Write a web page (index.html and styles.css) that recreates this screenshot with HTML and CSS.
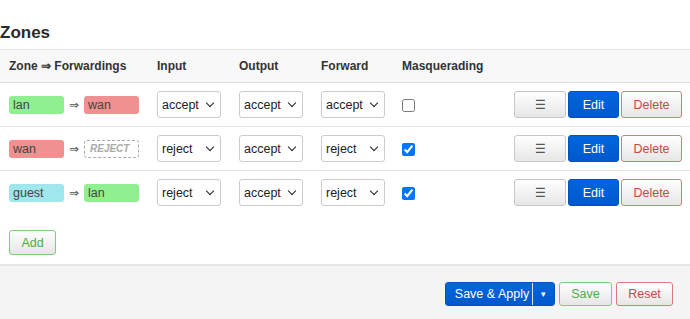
FILE: index.html
```html
<!DOCTYPE html>
<html lang="en">

<head>
    <meta charset="UTF-8">
    <title>Zones</title>
    <link rel="stylesheet" href="styles.css">
</head>

<body>
    <div class="section">
        <h3>Zones</h3>
        <table class="zones">
            <colgroup>
                <col class="c-zone">
                <col class="c-pol">
                <col class="c-pol">
                <col class="c-pol2">
                <col class="c-masq">
                <col>
            </colgroup>
            <thead>
                <tr>
                    <th>Zone ⇒ Forwardings</th>
                    <th>Input</th>
                    <th>Output</th>
                    <th>Forward</th>
                    <th>Masquerading</th>
                    <th></th>
                </tr>
            </thead>
            <tbody>
                <tr>
                    <td>
                        <div class="fwd">
                            <span class="badge lan">lan</span>
                            <span class="arrow">⇒</span>
                            <span class="badge wan">wan</span>
                        </div>
                    </td>
                    <td><span class="sel"><select><option selected>accept</option><option>reject</option></select></span></td>
                    <td><span class="sel"><select><option selected>accept</option><option>reject</option></select></span></td>
                    <td><span class="sel"><select><option selected>accept</option><option>reject</option></select></span></td>
                    <td><input type="checkbox"></td>
                    <td class="actions">
                        <button class="btn">☰</button><button class="btn edit">Edit</button><button class="btn delete">Delete</button>
                    </td>
                </tr>
                <tr>
                    <td>
                        <div class="fwd">
                            <span class="badge wan">wan</span>
                            <span class="arrow">⇒</span>
                            <span class="badge empty">REJECT</span>
                        </div>
                    </td>
                    <td><span class="sel"><select><option>accept</option><option selected>reject</option></select></span></td>
                    <td><span class="sel"><select><option selected>accept</option><option>reject</option></select></span></td>
                    <td><span class="sel"><select><option>accept</option><option selected>reject</option></select></span></td>
                    <td><input type="checkbox" checked></td>
                    <td class="actions">
                        <button class="btn">☰</button><button class="btn edit">Edit</button><button class="btn delete">Delete</button>
                    </td>
                </tr>
                <tr>
                    <td>
                        <div class="fwd">
                            <span class="badge guest">guest</span>
                            <span class="arrow">⇒</span>
                            <span class="badge lan">lan</span>
                        </div>
                    </td>
                    <td><span class="sel"><select><option>accept</option><option selected>reject</option></select></span></td>
                    <td><span class="sel"><select><option selected>accept</option><option>reject</option></select></span></td>
                    <td><span class="sel"><select><option>accept</option><option selected>reject</option></select></span></td>
                    <td><input type="checkbox" checked></td>
                    <td class="actions">
                        <button class="btn">☰</button><button class="btn edit">Edit</button><button class="btn delete">Delete</button>
                    </td>
                </tr>
            </tbody>
        </table>
        <div class="add-row">
            <button class="btn add">Add</button>
        </div>
    </div>

    <div class="page-actions">
        <div class="split">
            <button class="split-main">Save &amp; Apply</button><button class="split-toggle">▾</button>
        </div>
        <button class="btn save">Save</button>
        <button class="btn reset">Reset</button>
    </div>
</body>

</html>
```

FILE: styles.css
```css
* {
    margin: 0;
    padding: 0;
    box-sizing: border-box;
}

body {
    font-family: "Liberation Sans", Arial, sans-serif;
    font-size: 12px;
    color: #404040;
    background: #fff;
}

h3 {
    font-size: 17px;
    font-weight: bold;
    color: #2b2b2b;
    line-height: 20px;
    padding-top: 23px;
    padding-bottom: 6px;
}

.zones {
    width: 100%;
    border-collapse: collapse;
    table-layout: fixed;
}

.c-zone { width: 148px; }
.c-pol { width: 82px; }
.c-pol2 { width: 81px; }
.c-masq { width: 110px; }

.zones th {
    text-align: left;
    font-weight: bold;
    font-size: 12px;
    line-height: 16px;
    padding: 8px 9px;
    background: #f8f8f8;
    border-top: 1px solid #e4e4e4;
    border-bottom: 1px solid #dcdcdc;
    white-space: nowrap;
    color: #333;
}

.zones td {
    padding: 8px 9px;
    vertical-align: middle;
    border-bottom: 1px solid #e2e2e2;
}

.zones tbody tr:last-child td {
    border-bottom: none;
}

.fwd {
    display: flex;
    align-items: center;
}

.badge {
    display: inline-block;
    width: 55px;
    height: 18px;
    line-height: 18px;
    padding: 0 4px;
    border-radius: 3px;
    font-size: 12.5px;
    color: #444;
}

.lan { background: #90f090; }
.wan { background: #f09090; }
.guest { background: #a0e6ed; }

.badge.empty {
    background: #fff;
    border: 1px dashed #aaa;
    color: #aaa;
    font-style: italic;
    font-weight: bold;
    font-size: 10px;
    line-height: 16px;
    padding-left: 5px;
}

.arrow {
    width: 20px;
    text-align: center;
    color: #555;
}

.sel {
    position: relative;
    display: inline-block;
    vertical-align: middle;
}

.sel::after {
    content: "";
    position: absolute;
    right: 8px;
    top: 9px;
    width: 5px;
    height: 5px;
    border-right: 1.5px solid #222;
    border-bottom: 1.5px solid #222;
    transform: rotate(45deg);
    pointer-events: none;
}

select {
    appearance: none;
    -webkit-appearance: none;
    display: block;
    width: 64px;
    height: 27px;
    font-family: "Liberation Sans", Arial, sans-serif;
    font-size: 12.5px;
    color: #222;
    padding-left: 4px;
    border: 1px solid #ccc;
    border-radius: 3px;
    background: #fff;
}

input[type=checkbox] {
    width: 13px;
    height: 13px;
    margin: 0;
    vertical-align: middle;
}

.actions {
    text-align: right;
    white-space: nowrap;
}

.btn {
    height: 27px;
    padding: 0 10px;
    font-family: "Liberation Sans", Arial, sans-serif;
    font-size: 12.5px;
    color: #404040;
    border: 1px solid #c8c8c8;
    border-radius: 3px;
    background: linear-gradient(#fff, #e6e6e6);
    vertical-align: middle;
}

.actions .btn {
    margin-left: 2px;
}

.actions .btn:first-child {
    width: 52px;
    color: #555;
    font-size: 12px;
}

.btn.edit {
    width: 51px;
    color: #fff;
    background: linear-gradient(#0066dd, #0058cc);
    border-color: #0054b8;
}

.btn.delete {
    width: 61px;
    color: #c64848;
    border-color: #da7b7b;
}

.add-row {
    padding: 16px 9px 8px;
}

.btn.add {
    width: 47px;
    height: 25px;
    color: #4bab47;
    border-color: #7fcc7a;
}

.page-actions {
    margin-top: 1px;
    border-top: 2px solid #e6e6e6;
    background: #f4f4f4;
    height: 60px;
    display: flex;
    justify-content: flex-end;
    align-items: flex-start;
    gap: 4px;
    padding: 16px 17px 0 0;
}

.page-actions .btn {
    height: 24px;
}

.split {
    display: flex;
    height: 24px;
    border-radius: 3px;
    background: linear-gradient(#0066dd, #0058cc);
    border: 1px solid #0054b8;
    overflow: hidden;
}

.split-main {
    width: 87px;
    height: 22px;
    border: none;
    background: transparent;
    color: #fff;
    font-family: "Liberation Sans", Arial, sans-serif;
    font-size: 12.5px;
    padding-left: 6px;
    border-right: 1px solid #d6e3f5;
}

.split-toggle {
    width: 21px;
    height: 22px;
    border: none;
    background: transparent;
    color: #fff;
    font-size: 9px;
}

.btn.save {
    width: 53px;
    color: #4bab47;
    border-color: #7fcc7a;
}

.btn.reset {
    width: 57px;
    color: #c64848;
    border-color: #da7b7b;
}
```
